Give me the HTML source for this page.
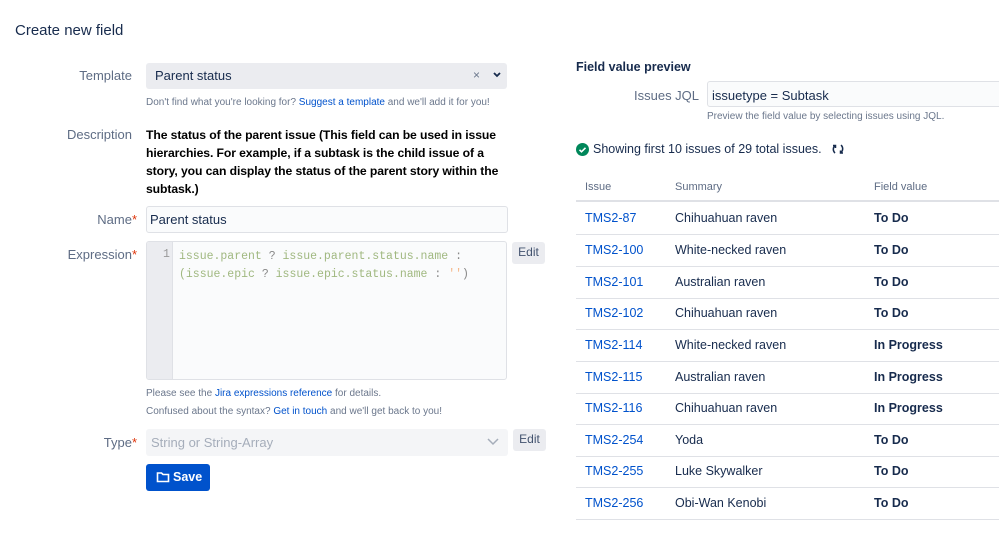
<!DOCTYPE html>
<html><head><style>
*{box-sizing:border-box;margin:0;padding:0}
body{width:999px;height:535px;background:#fff;font-family:"Liberation Sans",sans-serif;color:#172b4d;position:relative;overflow:hidden;font-size:13px}
.a{position:absolute;white-space:nowrap}
.lbl{position:absolute;text-align:right;color:#5e6c84;font-size:13px;width:140px}
.req{color:#de350b}
.help{font-size:10px;color:#6b778c}
.lnk{color:#0052cc}
.mono{font-family:"Liberation Mono",monospace;font-size:11.5px;color:#a0b880}
.row{position:absolute;left:576px;width:423px;height:32px;border-bottom:1px solid #dfe1e6;font-size:12.5px}
.row span{position:absolute;top:8px}
.c1{left:9px;color:#0052cc}.c2{left:99px;color:#172b4d}.c3{left:298px;font-weight:bold;color:#172b4d}
.btn{position:absolute;background:#ebecf0;border-radius:3px;font-size:12px;color:#42526e;text-align:center;line-height:21px}
</style></head><body>
<div class="a" style="left:15px;top:22px;font-size:15px">Create new field</div>

<div class="lbl" style="left:-8px;top:68px">Template</div>
<div class="a" style="left:146px;top:63px;width:361px;height:26px;background:#ebecf0;border-radius:3px"></div>
<div class="a" style="left:155px;top:68px;font-size:13px;color:#172b4d">Parent status</div>
<div class="a" style="left:473px;top:68px;font-size:12px;color:#6b778c">×</div>
<svg class="a" style="left:492px;top:71px" width="10" height="8"><path d="M2 2l3 3 3-3" stroke="#172b4d" stroke-width="1.8" fill="none"/></svg>
<div class="a help" style="left:146px;top:97px">Don't find what you're looking for? <span class="lnk">Suggest a template</span> and we'll add it for you!</div>

<div class="lbl" style="left:-8px;top:127px">Description</div>
<div class="a" style="left:146px;top:126px;font-weight:bold;font-size:12.2px;line-height:18px;white-space:normal;width:372px;color:#000;letter-spacing:-0.1px">The status of the parent issue (This field can be used in issue hierarchies. For example, if a subtask is the child issue of a story, you can display the status of the parent story within the subtask.)</div>

<div class="lbl" style="left:-3px;top:212px">Name<span class="req">*</span></div>
<div class="a" style="left:146px;top:206px;width:362px;height:27px;border:1px solid #dfe1e6;border-radius:3px;background:#fafbfc"></div>
<div class="a" style="left:150px;top:212px;font-size:13px">Parent status</div>

<div class="lbl" style="left:-3px;top:247px">Expression<span class="req">*</span></div>
<div class="a" style="left:146px;top:241px;width:361px;height:139px;border:1px solid #dfe1e6;border-radius:3px;background:#fafbfc;overflow:hidden">
<div style="position:absolute;left:0;top:0;width:26px;height:100%;background:#ebecf0;border-right:1px solid #dfe1e6"></div>
<div class="mono" style="position:absolute;left:16px;top:6px;color:#999">1</div>
<div class="mono" style="position:absolute;left:32px;top:6px;line-height:18px">issue.parent <span style="color:#888">?</span> issue.parent.status.name <span style="color:#888">:</span><br>(issue.epic <span style="color:#888">?</span> issue.epic.status.name <span style="color:#888">:</span> <span style="color:#f5b88a">''</span><span style="color:#888">)</span></div>
</div>
<div class="btn" style="left:512px;top:242px;width:33px;height:22px">Edit</div>
<div class="a help" style="left:146px;top:388px">Please see the <span class="lnk">Jira expressions reference</span> for details.</div>
<div class="a help" style="left:146px;top:406px">Confused about the syntax? <span class="lnk">Get in touch</span> and we'll get back to you!</div>

<div class="lbl" style="left:-3px;top:435px">Type<span class="req">*</span></div>
<div class="a" style="left:146px;top:429px;width:362px;height:27px;background:#f4f5f7;border-radius:3px"></div>
<div class="a" style="left:151px;top:435px;color:#a5adba">String or String-Array</div>
<svg class="a" style="left:486px;top:437px" width="14" height="10"><path d="M2 2l5 5 5-5" stroke="#a5adba" stroke-width="1.5" fill="none"/></svg>
<div class="btn" style="left:513px;top:429px;width:33px;height:22px">Edit</div>
<div class="a" style="left:146px;top:464px;width:64px;height:27px;background:#0052cc;border-radius:3px;color:#fff;font-weight:bold;font-size:12.5px">
<svg style="position:absolute;left:10px;top:7px" width="14" height="12"><path d="M1.5 2h4l1.5 1.5h5.5v7h-11z" stroke="#fff" stroke-width="1.6" fill="none"/></svg>
<span style="position:absolute;left:27px;top:6px">Save</span></div>

<div class="a" style="left:576px;top:60px;font-weight:bold;font-size:12.5px">Field value preview</div>
<div class="a" style="left:634px;top:88px;color:#5e6c84">Issues JQL</div>
<div class="a" style="left:707px;top:81px;width:300px;height:26px;border:1px solid #dfe1e6;border-radius:3px;background:#fafbfc"></div>
<div class="a" style="left:712px;top:88px">issuetype = Subtask</div>
<div class="a help" style="left:707px;top:111px">Preview the field value by selecting issues using JQL.</div>
<svg class="a" style="left:576px;top:143px" width="13" height="13"><circle cx="6.5" cy="6.5" r="6.5" fill="#00875a"/><path d="M3.5 6.8l2 2 4-4" stroke="#fff" stroke-width="1.6" fill="none"/></svg>
<div class="a" style="left:593px;top:142px;font-size:12.5px">Showing first 10 issues of 29 total issues.</div>
<svg class="a" style="left:831px;top:142px" width="14" height="14"><path d="M4 3.5a5 5 0 0 0 0 7.5M2 3.5h2.5V6M10 3a5 5 0 0 1 0 7.5M12 11h-2.5V8.5" stroke="#172b4d" stroke-width="1.5" fill="none"/></svg>

<div class="a" style="left:576px;top:172px;width:423px;height:30px;border-bottom:2px solid #dfe1e6;font-size:11px;color:#5e6c84">
<span style="position:absolute;left:9px;top:9px">Issue</span><span style="position:absolute;left:99px;top:9px">Summary</span><span style="position:absolute;left:298px;top:9px">Field value</span></div>
<div class="row" style="top:203px"><span class="c1">TMS2-87</span><span class="c2">Chihuahuan raven</span><span class="c3">To Do</span></div>
<div class="row" style="top:235px"><span class="c1">TMS2-100</span><span class="c2">White-necked raven</span><span class="c3">To Do</span></div>
<div class="row" style="top:267px"><span class="c1">TMS2-101</span><span class="c2">Australian raven</span><span class="c3">To Do</span></div>
<div class="row" style="top:298px"><span class="c1">TMS2-102</span><span class="c2">Chihuahuan raven</span><span class="c3">To Do</span></div>
<div class="row" style="top:330px"><span class="c1">TMS2-114</span><span class="c2">White-necked raven</span><span class="c3">In Progress</span></div>
<div class="row" style="top:362px"><span class="c1">TMS2-115</span><span class="c2">Australian raven</span><span class="c3">In Progress</span></div>
<div class="row" style="top:393px"><span class="c1">TMS2-116</span><span class="c2">Chihuahuan raven</span><span class="c3">In Progress</span></div>
<div class="row" style="top:425px"><span class="c1">TMS2-254</span><span class="c2">Yoda</span><span class="c3">To Do</span></div>
<div class="row" style="top:456px"><span class="c1">TMS2-255</span><span class="c2">Luke Skywalker</span><span class="c3">To Do</span></div>
<div class="row" style="top:488px"><span class="c1">TMS2-256</span><span class="c2">Obi-Wan Kenobi</span><span class="c3">To Do</span></div>
</body></html>
